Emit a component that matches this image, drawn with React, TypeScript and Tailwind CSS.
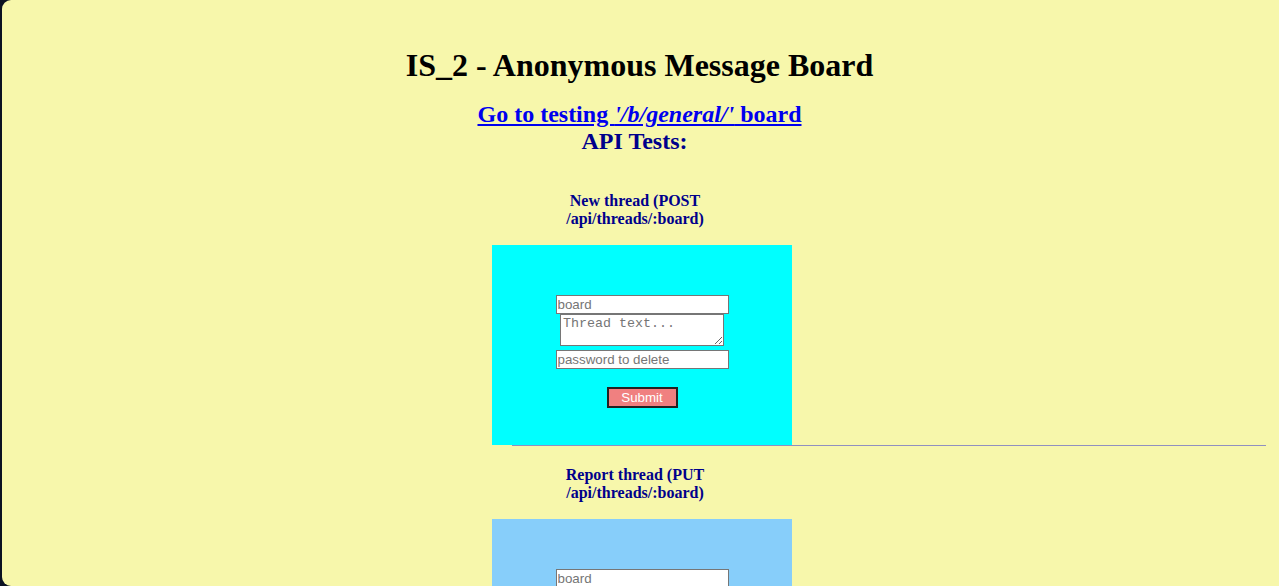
import React from "react";

function FormBox({ bg }: { bg: string }) {
  return (
    <div className={`${bg} w-[300px] h-[200px] flex flex-col items-center pt-[50px]`}>
      <input
        placeholder="board"
        className="box-border w-[173px] h-[19px] bg-white border border-[#767676] px-[1px] text-[13.33px] leading-[15px] text-black placeholder:text-[#757575] outline-none"
        style={{ fontFamily: '"Liberation Sans", Arial, sans-serif' }}
      />
      <textarea
        placeholder="Thread text..."
        className="box-border block w-[164px] h-[32px] bg-white border border-[#767676] px-[2px] py-[1px] text-[13.33px] leading-[15px] text-black placeholder:text-[#757575] outline-none resize-y"
        style={{ fontFamily: '"Liberation Mono", "DejaVu Sans Mono", monospace' }}
      />
      <input
        placeholder="password to delete"
        className="box-border w-[173px] h-[19px] mt-[4px] bg-white border border-[#767676] px-[1px] text-[13.33px] leading-[15px] text-black placeholder:text-[#757575] outline-none"
        style={{ fontFamily: '"Liberation Sans", Arial, sans-serif' }}
      />
      <button
        className="box-border w-[71px] h-[21px] mt-[18px] bg-[#f08080] border-2 border-[#222] text-white text-[13.33px] leading-[15px] flex items-center justify-center"
        style={{ fontFamily: '"Liberation Sans", Arial, sans-serif' }}
      >
        Submit
      </button>
    </div>
  );
}

function Heading({ children }: { children: React.ReactNode }) {
  return (
    <h4 className="w-[286px] flex justify-center text-[16px] leading-[18.4px] font-bold text-[#00008b]">
      <span className="w-[160px] text-center">{children}</span>
    </h4>
  );
}

export default function App() {
  return (
    <div className="w-[1279px] h-[586px] bg-[#0b1222] overflow-hidden">
      <div
        className="ml-[2px] w-[1277px] h-[586px] bg-[#f7f7ab] rounded-l-[9px] overflow-hidden"
        style={{ fontFamily: '"Liberation Serif", "Times New Roman", serif' }}
      >
        <h1 className="pt-[47px] pr-[2px] text-center text-[32px] leading-[37px] font-bold text-black">
          IS_2 - Anonymous Message Board
        </h1>
        <div className="mt-[17px] pr-[2px] text-center text-[24px] leading-[27px] font-bold">
          <a href="#" className="text-[#0000ee] underline">
            Go to testing <i>'/b/general/'</i> board
          </a>
        </div>
        <div className="pr-[12px] text-center text-[24px] leading-[27px] font-bold text-[#00008b]">
          API Tests:
        </div>
        <div className="ml-[490px] mt-[37px] flex flex-col">
          <Heading>New thread (POST /api/threads/:board)</Heading>
          <div className="mt-[16px]">
            <FormBox bg="bg-[#00ffff]" />
          </div>
          <div className="ml-[20px] w-[754px] h-[1px] bg-[#9090c0]" />
          <div className="mt-[20px]">
            <Heading>Report thread (PUT /api/threads/:board)</Heading>
          </div>
          <div className="mt-[16px]">
            <FormBox bg="bg-[#87cefa]" />
          </div>
        </div>
      </div>
    </div>
  );
}
